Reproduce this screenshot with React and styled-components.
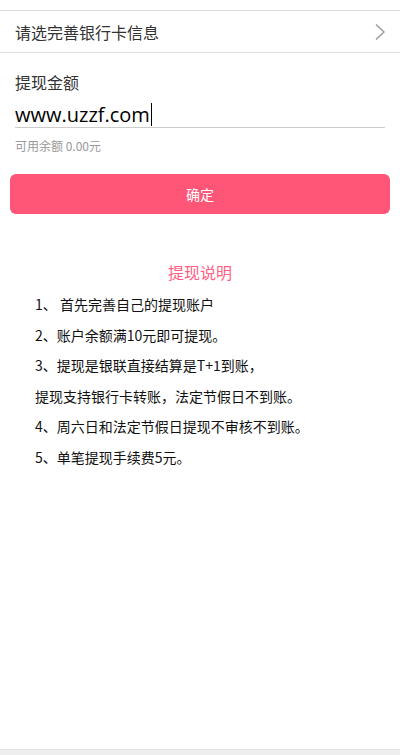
import React from "react";
import styled, { createGlobalStyle } from "styled-components";

const Global = createGlobalStyle`
  html, body { margin: 0; padding: 0; background: #fff; }
  body { font-family: "Microsoft YaHei", "Noto Sans CJK SC", "Noto Sans", sans-serif; color: #333; }
`;

const Page = styled.div`
  width: 400px;
  height: 755px;
  display: flex;
  flex-direction: column;
  background: #fff;
`;

const Main = styled.div`
  flex: 1;
  padding-top: 10px;
`;

const BankRow = styled.div`
  height: 41px;
  border-top: 1px solid #ddd;
  border-bottom: 1px solid #ddd;
  display: flex;
  align-items: center;
  justify-content: space-between;
  padding: 0 14px 0 15px;
  font-size: 16px;
  color: #333;
`;

const AmountBlock = styled.div`
  padding: 0 15px;
`;

const Label = styled.div`
  margin-top: 18px;
  font-size: 16px;
  line-height: 22px;
  color: #333;
`;

const InputLine = styled.div`
  margin-top: 8px;
  height: 26px;
  border-bottom: 1px solid #ccc;
  display: flex;
  align-items: center;
  font-family: "Open Sans", "Noto Sans", sans-serif;
  font-size: 20px;
  color: #000;
`;

const Caret = styled.span`
  display: inline-block;
  width: 1px;
  height: 23px;
  background: #000;
  margin-left: 1px;
`;

const Balance = styled.div`
  margin-top: 9px;
  font-size: 12px;
  color: #999;
  line-height: 18px;
`;

const Button = styled.div`
  margin: 19px 10px 0;
  height: 40px;
  border-radius: 6px;
  background: #ff5577;
  color: #fff;
  font-size: 14px;
  display: flex;
  align-items: center;
  justify-content: center;
`;

const Title = styled.div`
  margin-top: 47px;
  text-align: center;
  color: #ff5f84;
  font-size: 16px;
  line-height: 22px;
`;

const List = styled.div`
  padding: 6px 0 0 35px;
`;

const Item = styled.p`
  margin: 0;
  height: 30.6px;
  font-size: 14px;
  line-height: 30.6px;
  color: #111;
`;

const Footer = styled.div`
  height: 5px;
  border-top: 1px solid #e0e0e0;
  background: #eee;
`;

const items = [
  "1、 首先完善自己的提现账户",
  "2、账户余额满10元即可提现。",
  "3、提现是银联直接结算是T+1到账，",
  "提现支持银行卡转账，法定节假日不到账。",
  "4、周六日和法定节假日提现不审核不到账。",
  "5、单笔提现手续费5元。",
];

export default function App() {
  return (
    <Page>
      <Global />
      <Main>
        <BankRow>
          <span>请选完善银行卡信息</span>
          <svg width="12" height="18" viewBox="0 0 12 18">
            <path d="M2 1.5 L10 9 L2 16.5" fill="none" stroke="#999" strokeWidth="1.4" />
          </svg>
        </BankRow>
        <AmountBlock>
          <Label>提现金额</Label>
          <InputLine>
            www.uzzf.com<Caret />
          </InputLine>
          <Balance>可用余额 0.00元</Balance>
        </AmountBlock>
        <Button>确定</Button>
        <Title>提现说明</Title>
        <List>
          {items.map((t) => (
            <Item key={t}>{t}</Item>
          ))}
        </List>
      </Main>
      <Footer />
    </Page>
  );
}
